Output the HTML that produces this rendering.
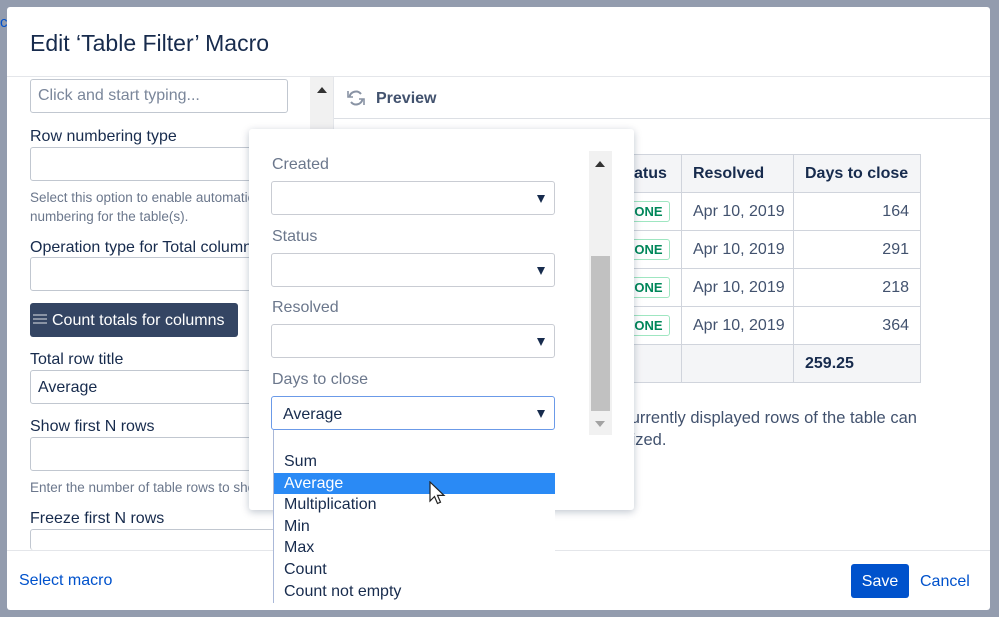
<!DOCTYPE html>
<html><head><meta charset="utf-8"><style>
*{box-sizing:border-box;margin:0;padding:0}
body{width:999px;height:617px;overflow:hidden;background:#939cae;font-family:"Liberation Sans",sans-serif;color:#172b4d;position:relative}
.a{position:absolute}
.dlg{left:7px;top:7px;width:983px;height:603px;background:#fff;border-radius:3px}
.lbl{font-size:16px;color:#172b4d}
.inp{border:1px solid #c1c7d0;border-radius:3px;background:#fff;height:34px}
.help{font-size:13.5px;color:#6b778c;line-height:19px;white-space:nowrap}
.sel{border:1px solid #c9ccd3;border-radius:3px;background:#fff;height:34px;width:284px}
.sel:after{content:"";position:absolute;right:9px;top:13px;border-left:4px solid transparent;border-right:4px solid transparent;border-top:8px solid #172b4d}
.plbl{font-size:16px;color:#6b778c}
td{border:1px solid #d0d4dc;height:38px;font-size:16px;padding:0 11px;color:#42526e;white-space:nowrap}
th{border:1px solid #d0d4dc;height:38px;font-size:16px;padding:0 11px;background:#f4f5f7;text-align:left;color:#172b4d;white-space:nowrap}
.done{display:inline-block;border:1px solid #9fe6c1;border-radius:3px;color:#00875a;font-weight:bold;font-size:13px;padding:2px 6px}
.it{height:21.6px;line-height:21.6px;padding-left:10px;font-size:16px;color:#172b4d}
</style></head><body>
<div class="a" style="left:0;top:14px;color:#0052cc;font-size:15px">c</div>
<div class="a dlg"></div>
<div class="a" style="left:30px;top:30px;font-size:23px;color:#172b4d">Edit ‘Table Filter’ Macro</div>
<div class="a" style="left:7px;top:76px;width:983px;height:1px;background:#e4e6ea"></div>
<div class="a inp" style="left:30px;top:79px;width:258px;"><span class="a" style="left:7px;top:7px;font-size:16px;color:#7a869a">Click and start typing...</span></div>
<div class="a lbl" style="left:30px;top:128px">Row numbering type</div>
<div class="a inp" style="left:30px;top:147px;width:260px"></div>
<div class="a help" style="left:30px;top:188px">Select this option to enable automatic row<br>numbering for the table(s).</div>
<div class="a lbl" style="left:30px;top:239px">Operation type for Total column</div>
<div class="a inp" style="left:30px;top:257px;width:260px"></div>
<div class="a" style="left:30px;top:303px;width:208px;height:34px;background:#344563;border-radius:3px;color:#fff;font-size:16px;line-height:36px;padding-left:22px">Count totals for columns</div>
<div class="a" style="left:33px;top:314px;width:14px;height:2px;background:#8993a4;box-shadow:0 4px 0 #8993a4,0 8px 0 #8993a4"></div>
<div class="a lbl" style="left:30px;top:351px">Total row title</div>
<div class="a inp" style="left:30px;top:370px;width:260px"><span class="a" style="left:7px;top:8px;font-size:16px">Average</span></div>
<div class="a lbl" style="left:30px;top:418px">Show first N rows</div>
<div class="a inp" style="left:30px;top:437px;width:260px"></div>
<div class="a help" style="left:30px;top:478px">Enter the number of table rows to show</div>
<div class="a lbl" style="left:30px;top:510px">Freeze first N rows</div>
<div class="a inp" style="left:30px;top:529px;width:260px;height:21px;border-bottom:none"></div>
<div class="a" style="left:310px;top:77px;width:23px;height:473px;background:#f1f1f1"></div>
<div class="a" style="left:317px;top:87px;border-left:5px solid transparent;border-right:5px solid transparent;border-bottom:6px solid #333"></div>
<div class="a" style="left:333px;top:77px;width:1px;height:473px;background:#e4e6ea"></div>
<svg class="a" style="left:346px;top:88px" width="20" height="20" viewBox="0 0 20 20" fill="none" stroke="#8993a4" stroke-width="2"><path d="M15 6A6.5 6.5 0 0 0 3.5 9"/><path d="M5 14A6.5 6.5 0 0 0 16.5 11"/><path d="M2 3v6h5" stroke-width="1.6"/><path d="M18 17v-6h-5" stroke-width="1.6"/></svg>
<div class="a" style="left:376px;top:90px;font-size:16px;font-weight:bold;color:#42526e">Preview</div>
<div class="a" style="left:334px;top:118px;width:656px;height:1px;background:#dcdfe4"></div>
<table class="a" style="left:606px;top:154px;border-collapse:collapse;width:315px;table-layout:fixed">
<tr><th style="width:75px">Status</th><th style="width:112px">Resolved</th><th>Days to close</th></tr>
<tr><td><span class="done">DONE</span></td><td>Apr 10, 2019</td><td style="text-align:right">164</td></tr>
<tr><td><span class="done">DONE</span></td><td>Apr 10, 2019</td><td style="text-align:right">291</td></tr>
<tr><td><span class="done">DONE</span></td><td>Apr 10, 2019</td><td style="text-align:right">218</td></tr>
<tr><td><span class="done">DONE</span></td><td>Apr 10, 2019</td><td style="text-align:right">364</td></tr>
<tr><th></th><th></th><th style="color:#172b4d">259.25</th></tr>
</table>
<div class="a" style="left:584px;top:407px;font-size:16.5px;line-height:22px;color:#42526e;white-space:nowrap">Only currently displayed rows of the table can</div>
<div class="a" style="left:572px;top:429px;font-size:16.5px;line-height:22px;color:#42526e;white-space:nowrap">summarized.</div>
<div class="a" style="left:7px;top:550px;width:983px;height:1px;background:#e4e6ea"></div>
<div class="a" style="left:19px;top:572px;font-size:16px;color:#0052cc">Select macro</div>
<div class="a" style="left:851px;top:564px;width:58px;height:34px;background:#0052cc;border-radius:3px;color:#fff;font-size:16px;text-align:center;line-height:35px">Save</div>
<div class="a" style="left:920px;top:573px;font-size:16px;color:#0052cc">Cancel</div>
<div class="a" style="left:249px;top:129px;width:385px;height:381px;background:#fff;border-radius:3px;box-shadow:0 2px 8px rgba(9,30,66,.25)"></div>
<div class="a plbl" style="left:272px;top:156px">Created</div>
<div class="a sel" style="left:271px;top:181px"></div>
<div class="a plbl" style="left:272px;top:228px">Status</div>
<div class="a sel" style="left:271px;top:253px"></div>
<div class="a plbl" style="left:272px;top:299px">Resolved</div>
<div class="a sel" style="left:271px;top:324px"></div>
<div class="a plbl" style="left:272px;top:371px">Days to close</div>
<div class="a sel" style="left:271px;top:396px;border-color:#6b9ae8"><span class="a" style="left:11px;top:9px;font-size:16px;color:#172b4d">Average</span></div>
<div class="a" style="left:589px;top:151px;width:23px;height:284px;background:#f1f1f1"></div>
<div class="a" style="left:591px;top:256px;width:19px;height:155px;background:#c1c1c1"></div>
<div class="a" style="left:595px;top:161px;border-left:5px solid transparent;border-right:5px solid transparent;border-bottom:6px solid #333"></div>
<div class="a" style="left:595px;top:421px;border-left:5px solid transparent;border-right:5px solid transparent;border-top:6px solid #a3a3a3"></div>
<div class="a" style="left:273px;top:430px;width:282px;height:173px;background:#fff;border-left:1px solid #aab8d8">
<div style="height:21px"></div>
<div class="it">Sum</div>
<div class="it" style="background:#2a8af5;color:#fff">Average</div>
<div class="it">Multiplication</div>
<div class="it">Min</div>
<div class="it">Max</div>
<div class="it">Count</div>
<div class="it">Count not empty</div>
</div>
<svg class="a" style="left:429px;top:481px" width="20" height="26" viewBox="0 0 20 26"><path d="M1 1v19l4.5-4.5 3 7 3-1.3-3-6.8h6.5z" fill="#fff" stroke="#222" stroke-width="1.2"/></svg>
</body></html>
